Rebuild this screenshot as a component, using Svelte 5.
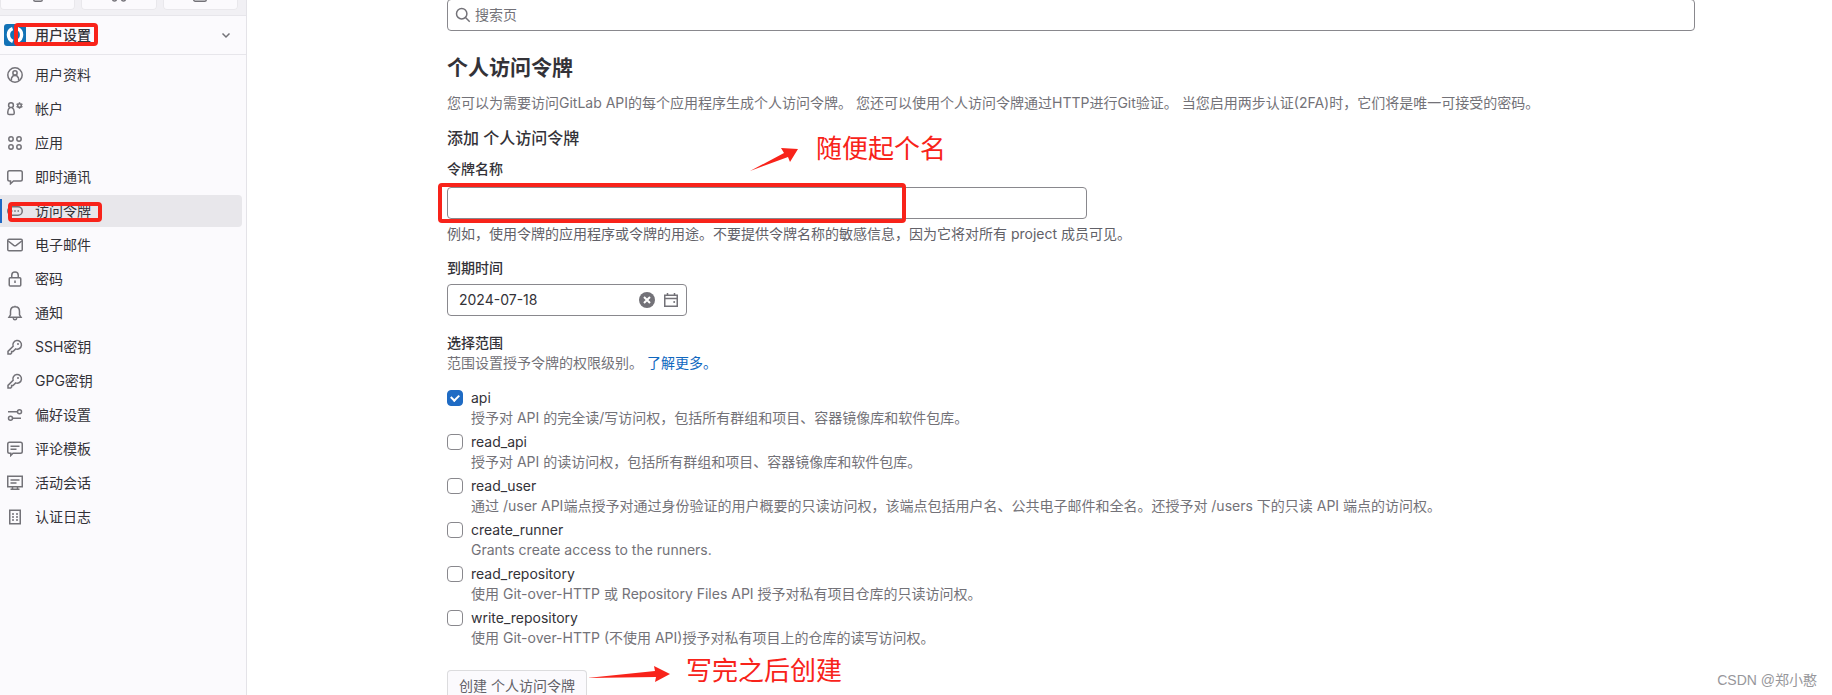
<script lang="ts">
	// Types/constants
	type NavItem = {
		id: string
		label: string
		active?: boolean
	}

	type Scope = {
		id: string
		checked: boolean
		description: string
	}

	const shortcuts = [
		{ id: 'issues', label: '议题' },
		{ id: 'merge', label: '合并请求' },
		{ id: 'todo', label: '待办事项' },
	]

	const navItems: NavItem[] = [
		{ id: 'profile', label: '用户资料' },
		{ id: 'account', label: '帐户' },
		{ id: 'applications', label: '应用' },
		{ id: 'chat', label: '即时通讯' },
		{ id: 'token', label: '访问令牌', active: true },
		{ id: 'mail', label: '电子邮件' },
		{ id: 'lock', label: '密码' },
		{ id: 'bell', label: '通知' },
		{ id: 'key', label: 'SSH密钥' },
		{ id: 'key', label: 'GPG密钥' },
		{ id: 'preferences', label: '偏好设置' },
		{ id: 'comment', label: '评论模板' },
		{ id: 'monitor', label: '活动会话' },
		{ id: 'log', label: '认证日志' },
	]

	// State
	let search = $state('')
	let tokenName = $state('')
	let expiresAt = $state('2024-07-18')

	let scopes = $state<Scope[]>([
		{
			id: 'api',
			checked: true,
			description: '授予对 API 的完全读/写访问权，包括所有群组和项目、容器镜像库和软件包库。',
		},
		{
			id: 'read_api',
			checked: false,
			description: '授予对 API 的读访问权，包括所有群组和项目、容器镜像库和软件包库。',
		},
		{
			id: 'read_user',
			checked: false,
			description:
				'通过 /user API端点授予对通过身份验证的用户概要的只读访问权，该端点包括用户名、公共电子邮件和全名。还授予对 /users 下的只读 API 端点的访问权。',
		},
		{
			id: 'create_runner',
			checked: false,
			description: 'Grants create access to the runners.',
		},
		{
			id: 'read_repository',
			checked: false,
			description: '使用 Git-over-HTTP 或 Repository Files API 授予对私有项目仓库的只读访问权。',
		},
		{
			id: 'write_repository',
			checked: false,
			description: '使用 Git-over-HTTP (不使用 API)授予对私有项目上的仓库的读写访问权。',
		},
	])
</script>

{#snippet icon(id: string)}
	<svg class="icon" width="16" height="16" viewBox="0 0 16 16" aria-hidden="true">
		{#if id === 'issues'}
			<rect x="3.75" y="0.75" width="8.5" height="14.5" rx="1.5" />
		{:else if id === 'merge'}
			<circle cx="3.5" cy="13" r="2" />
			<circle cx="12.5" cy="13" r="2" />
			<path d="M3.5 11V2M12.5 11V5a2 2 0 0 0-2-2H8" />
		{:else if id === 'todo'}
			<rect x="1.75" y="1.75" width="12.5" height="13.5" rx="1.5" />
		{:else if id === 'profile'}
			<circle cx="8" cy="8" r="7.2" />
			<circle cx="8" cy="5.9" r="2.1" />
			<path d="M4.4 13.6V12a3.6 3.6 0 0 1 7.2 0v1.6M5.2 10.4 6.6 8M10.8 10.4 9.4 8" />
		{:else if id === 'account'}
			<circle cx="4" cy="4.2" r="2.4" />
			<path d="M2.8 6.6C1.5 7.6.8 9 .8 11v1.2c0 .8.5 1.3 1.3 1.3h3.8c.8 0 1.3-.5 1.3-1.3V11c0-2-.7-3.4-2-4.4" />
			<circle cx="12.5" cy="4.5" r="1.8" />
			<path d="M12.5 1.2v1.2M12.5 6.6v1.2M9.6 2.8l1.1.7M14.3 5.5l1.1.7M9.6 6.2l1.1-.7M14.3 3.5l1.1-.7" />
		{:else if id === 'applications'}
			<circle cx="4" cy="4" r="2.2" />
			<circle cx="12" cy="4" r="2.2" />
			<circle cx="4" cy="12" r="2.2" />
			<circle cx="12" cy="12" r="2.2" />
		{:else if id === 'chat'}
			<path d="M2.5 1.75h11c1 0 1.75.75 1.75 1.75v6.75c0 1-.75 1.75-1.75 1.75H6.5l-3 2.75V12h-1C1.5 12 .75 11.25.75 10.25V3.5c0-1 .75-1.75 1.75-1.75z" />
		{:else if id === 'token'}
			<rect x="0.75" y="3.75" width="14.5" height="8.5" rx="4.25" />
			<path d="M4 8h1.5M7.25 8h1.5M10.5 8H12" />
		{:else if id === 'mail'}
			<rect x="0.75" y="2.25" width="14.5" height="11.5" rx="1.25" />
			<path d="m1.2 4 5.6 4.3c.7.5 1.7.5 2.4 0L14.8 4" />
		{:else if id === 'lock'}
			<rect x="2.25" y="6.75" width="11.5" height="8.25" rx="1" />
			<path d="M4.75 6.5V4.2C4.75 2.4 6.2 1 8 1s3.25 1.4 3.25 3.2v2.3M8 9.5V12" />
		{:else if id === 'bell'}
			<path d="M8 .8v1M8 1.8c-2.8 0-4.5 2-4.5 4.6v3.4L2 12.2h12l-1.5-2.4V6.4c0-2.6-1.7-4.6-4.5-4.6zM6.2 13.2c.2 1 .9 1.6 1.8 1.6s1.6-.6 1.8-1.6" />
		{:else if id === 'key'}
			<path d="M6.1 7.3A4.3 4.3 0 1 1 8.7 9.9L6 12.6H4.6V14l-.9 1H1v-2.6z" />
			<circle class="solid" cx="11" cy="5" r="1" />
		{:else if id === 'preferences'}
			<circle cx="12.5" cy="4.8" r="2" />
			<circle cx="3.5" cy="11.2" r="2" />
			<path d="M1 4.8h9.5M5.5 11.2H14" />
		{:else if id === 'comment'}
			<path d="M2.5 1.25h11c1 0 1.75.75 1.75 1.75v7.5c0 1-.75 1.75-1.75 1.75H6L3.75 14.5v-2.25H2.5C1.5 12.25.75 11.5.75 10.5V3c0-1 .75-1.75 1.75-1.75zM3.5 5.25h9M3.5 8.25h6" />
		{:else if id === 'monitor'}
			<path d="M.75 1.25h14.5v10.5H.75zM5.5 12v2.5M10.5 12v2.5M3.5 14.25h9M3.5 5h9M3.5 8h6" />
		{:else if id === 'log'}
			<path d="M2.75 1.25h10.5v13.5H2.75zM5 5h2M9 5h2M5 8h2M9 8h2M5 11h2M9 11h2" />
		{:else if id === 'search'}
			<circle cx="6.7" cy="6.7" r="5.2" />
			<path d="m10.5 10.5 4.2 4.2" />
		{:else if id === 'chevron'}
			<path d="m4.5 6.5 3.5 3.5 3.5-3.5" />
		{:else if id === 'clear'}
			<circle class="solid" cx="8" cy="8" r="8" />
			<path class="cross" d="m5 5 6 6M11 5l-6 6" />
		{:else if id === 'calendar'}
			<path d="M1.75 3.25h12.5v11H1.75zM1.75 6.5h12.5M4.5 1v2M11.5 1v2" />
			<circle class="solid" cx="11.2" cy="10" r="1" />
		{/if}
	</svg>
{/snippet}

<div class="page">
	<aside class="sidebar">
		<div class="shortcuts">
			{#each shortcuts as shortcut}
				<button type="button" aria-label={shortcut.label}>{@render icon(shortcut.id)}</button>
			{/each}
		</div>

		<button type="button" class="context">
			<svg class="avatar" width="22" height="22" viewBox="0 0 22 22" aria-hidden="true">
				<rect width="22" height="22" rx="3" fill="#1272b6" />
				<path d="M8.6 4.6C3 6.6 3 15 8.8 17.4M13.4 4.6C19 6.6 19 15 13.2 17.4" fill="none" stroke="#fff" stroke-width="3.4" />
				<path d="M11 3v9" stroke="#1272b6" stroke-width="2" />
			</svg>
			<span>用户设置</span>
			{@render icon('chevron')}
			<i class="mark mark-context"></i>
		</button>

		<nav aria-label="用户设置">
			{#each navItems as item}
				<a href="#{item.id}" class:active={item.active} aria-current={item.active ? 'page' : undefined}>
					{@render icon(item.id)}
					<span>{item.label}</span>
					{#if item.active}
						<i class="mark mark-nav"></i>
					{/if}
				</a>
			{/each}
		</nav>
	</aside>

	<main>
		<label class="search">
			{@render icon('search')}
			<input type="search" placeholder="搜索页" aria-label="搜索页" bind:value={search} />
		</label>

		<h1>个人访问令牌</h1>
		<p class="intro">
			您可以为需要访问GitLab API的每个应用程序生成个人访问令牌。 您还可以使用个人访问令牌通过HTTP进行Git验证。 当您启用两步认证(2FA)时，它们将是唯一可接受的密码。
		</p>

		<form onsubmit={e => e.preventDefault()}>
			<div class="heading">
				<h2>添加 个人访问令牌</h2>
				<div class="note note-name">
					<svg width="48" height="26" viewBox="0 0 48 26" aria-hidden="true">
						<path d="M0 25 34 7 31 2 48 3 40 16 38 11Z" />
					</svg>
					<span>随便起个名</span>
				</div>
			</div>

			<label class="title" for="token-name">令牌名称</label>
			<div class="name-field">
				<input id="token-name" class="box" type="text" bind:value={tokenName} />
				<i class="mark mark-name"></i>
			</div>
			<p class="name-help">例如，使用令牌的应用程序或令牌的用途。不要提供令牌名称的敏感信息，因为它将对所有 project 成员可见。</p>

			<label class="title" for="expires-at">到期时间</label>
			<div class="date box">
				<input id="expires-at" type="text" bind:value={expiresAt} />
				<button type="button" aria-label="清除日期" onclick={() => (expiresAt = '')}>{@render icon('clear')}</button>
				<button type="button" aria-label="打开日历">{@render icon('calendar')}</button>
			</div>

			<fieldset>
				<legend class="title">选择范围</legend>
				<p>范围设置授予令牌的权限级别。 <a href="#scopes">了解更多。</a></p>
				<div class="scopes">
					{#each scopes as scope}
						<div class="scope">
							<input id={scope.id} type="checkbox" bind:checked={scope.checked} />
							<label for={scope.id}>{scope.id}</label>
							<p>{scope.description}</p>
						</div>
					{/each}
				</div>
			</fieldset>

			<div class="actions">
				<button type="submit" class="submit">创建 个人访问令牌</button>
				<div class="note note-create">
					<svg width="84" height="18" viewBox="0 0 84 18" aria-hidden="true">
						<path d="M0 13 68 6 67 1 83 9 68 17 69 12Z" />
					</svg>
					<span>写完之后创建</span>
				</div>
			</div>
		</form>
	</main>

	<div class="watermark">CSDN @郑小憨</div>
</div>

<style>
	:global(body) {
		margin: 0;
	}

	.page {
		--text: #333238;
		--muted: #737278;
		--border: #89888d;
		--red: #f8231a;

		position: relative;
		display: flex;
		height: 100vh;
		overflow: hidden;
		background: #fff;
		color: var(--text);
		font-family: Inter, 'Noto Sans CJK SC', sans-serif;
		font-size: 14px;
		line-height: 20px;
	}

	* {
		box-sizing: border-box;
	}

	h1,
	h2,
	p,
	fieldset,
	legend {
		margin: 0;
		padding: 0;
		border: 0;
	}

	button,
	input {
		margin: 0;
		padding: 0;
		border: 0;
		background: none;
		color: inherit;
		font: inherit;
	}

	.icon {
		flex: none;
		display: block;
		fill: none;
		stroke: #737278;
		stroke-width: 1.5;

		.solid {
			fill: #737278;
			stroke: none;
		}

		.cross {
			stroke: #fff;
			stroke-width: 2;
		}
	}

	.sidebar {
		flex: none;
		width: 247px;
		border-right: 1px solid #e4e3e8;
		background: #fbfafd;
	}

	.shortcuts {
		display: flex;
		gap: 6px;
		height: 38px;
		margin-top: -22px;
		padding: 0 8px 5px 0;
		background: #f1f0f4;
		border-bottom: 1px solid #e7e6eb;

		button {
			display: grid;
			flex: 1;
			place-items: center;
			border-radius: 4px;
			background: #fbfafd;
			box-shadow: inset 0 0 0 1px #e9e8ec;
		}
	}

	.context {
		position: relative;
		display: flex;
		align-items: center;
		gap: 9px;
		width: 100%;
		height: 39px;
		padding: 0 12px 0 4px;
		border-bottom: 1px solid #e7e6eb;
		font-weight: 500;

		span {
			flex: 1;
			text-align: left;
		}
	}

	nav {
		display: flex;
		flex-direction: column;
		gap: 2px;
		padding: 4px 4px 0 0;

		a {
			position: relative;
			display: flex;
			align-items: center;
			gap: 12px;
			height: 32px;
			padding-left: 7px;
			border-radius: 0 4px 4px 0;
			color: inherit;
			text-decoration: none;
		}

		.active {
			background: #e8e7eb;

			&::before {
				content: '';
				position: absolute;
				top: 4px;
				left: 0;
				width: 2px;
				height: 24px;
				background: #1f68c4;
			}
		}
	}

	main {
		flex: 1;
		min-width: 0;
		padding: 0 137px 0 200px;
	}

	.search {
		display: flex;
		align-items: center;
		gap: 4px;
		height: 32px;
		margin-top: -1px;
		padding: 0 8px 0 7px;
		border: 1px solid var(--border);
		border-radius: 4px;

		input {
			flex: 1;
			outline: none;
		}

		input::placeholder {
			color: var(--muted);
			opacity: 1;
		}
	}

	h1 {
		margin-top: 24px;
		font-size: 21px;
		font-weight: 700;
		line-height: 26px;
	}

	.intro {
		margin-top: 12px;
		color: var(--muted);
	}

	.heading {
		position: relative;
		margin-top: 15px;
	}

	h2 {
		font-size: 16px;
		font-weight: 500;
		line-height: 20px;
	}

	.title {
		display: block;
		font-weight: 500;
	}

	form > .title {
		margin-top: 11px;
	}

	.box {
		height: 32px;
		border: 1px solid var(--border);
		border-radius: 4px;
	}

	.name-field {
		position: relative;
		max-width: 640px;
		margin-top: 8px;

		.box {
			display: block;
			width: 100%;
			padding: 0 12px;
		}
	}

	.name-help {
		margin: 5px 0 14px;
		color: #626168;
	}

	.date {
		display: flex;
		align-items: center;
		gap: 8px;
		width: 240px;
		margin-top: 6px;
		padding: 0 7px 0 11px;

		input {
			flex: 1;
			min-width: 0;
		}
	}

	fieldset {
		margin-top: 17px;

		p {
			color: var(--muted);
		}

		a {
			color: #1068bf;
			text-decoration: none;
		}
	}

	.scopes {
		display: grid;
		gap: 4px;
		margin-top: 15px;
	}

	.scope {
		display: grid;
		grid-template-columns: 16px 1fr;
		column-gap: 8px;
		align-items: center;

		p {
			grid-column: 2;
		}

		input {
			width: 16px;
			height: 16px;
			appearance: none;
			border: 1px solid var(--border);
			border-radius: 4px;
			background: #fff;
		}

		input:checked {
			display: grid;
			place-items: center;
			border-color: #1f6bc4;
			background: #1f6bc4;
		}

		input:checked::before {
			content: '';
			width: 6px;
			height: 4px;
			margin-bottom: 2px;
			border: solid #fff;
			border-width: 0 0 2px 2px;
			rotate: -45deg;
		}
	}

	.actions {
		position: relative;
		margin-top: 22px;
	}

	.submit {
		height: 32px;
		padding: 0 12px;
		border-radius: 4px;
		background: #fbfafd;
		box-shadow: inset 0 0 0 1px #dcdcde;
		color: #626168;
	}

	/* Hand-drawn annotations */
	.mark {
		position: absolute;
		border: 4px solid var(--red);
		border-radius: 4px;
		pointer-events: none;
	}

	.mark-context {
		top: 7px;
		left: 14px;
		width: 84px;
		height: 23px;
	}

	.mark-nav {
		top: 7px;
		left: 8px;
		width: 94px;
		height: 20px;
	}

	.mark-name {
		top: -4px;
		left: -9px;
		width: 468px;
		height: 40px;
	}

	.note {
		position: absolute;
		display: flex;
		align-items: flex-start;
		color: var(--red);
		font-size: 26px;
		line-height: 32px;
		white-space: nowrap;

		svg {
			fill: currentColor;
		}
	}

	.note-name {
		top: 5px;
		left: 303px;
		gap: 18px;

		svg {
			margin-top: 13px;
		}
	}

	.note-create {
		top: -15px;
		left: 140px;
		gap: 15px;

		svg {
			margin-top: 10px;
		}
	}

	.watermark {
		position: absolute;
		right: 15px;
		bottom: 5px;
		color: #97979b;
		font-family: 'Liberation Sans', 'Noto Sans CJK SC', sans-serif;
		font-size: 14px;
	}
</style>
